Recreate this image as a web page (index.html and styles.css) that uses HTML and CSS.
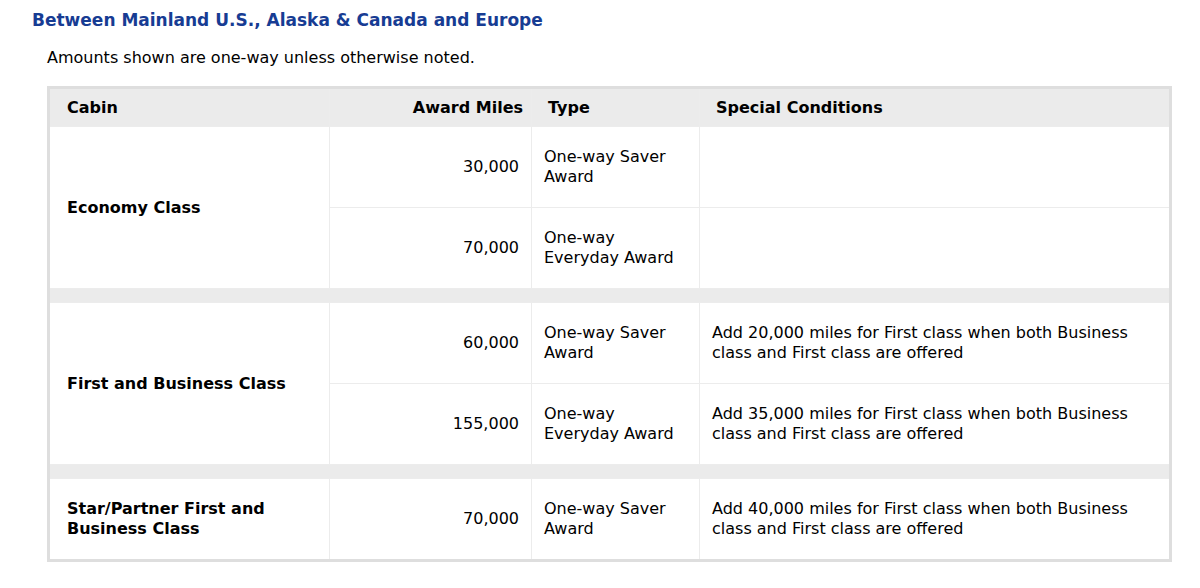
FILE: index.html
```html
<!DOCTYPE html>
<html>
<head>
<meta charset="utf-8">
<link rel="stylesheet" href="styles.css">
</head>
<body>
<div class="page">
  <h2 class="title">Between Mainland U.S., Alaska &amp; Canada and Europe</h2>
  <p class="note">Amounts shown are one-way unless otherwise noted.</p>
  <table class="awards">
    <thead>
      <tr class="head">
        <th class="c-cabin">Cabin</th>
        <th class="c-miles">Award Miles</th>
        <th class="c-type">Type</th>
        <th class="c-cond">Special Conditions</th>
      </tr>
    </thead>
    <tbody>
      <tr class="row">
        <td class="cabin" rowspan="2">Economy Class</td>
        <td class="miles">30,000</td>
        <td class="type">One-way Saver<br>Award</td>
        <td class="cond"></td>
      </tr>
      <tr class="row">
        <td class="miles">70,000</td>
        <td class="type">One-way<br>Everyday Award</td>
        <td class="cond"></td>
      </tr>
      <tr class="spacer"><td colspan="4"></td></tr>
      <tr class="row">
        <td class="cabin" rowspan="2">First and Business Class</td>
        <td class="miles">60,000</td>
        <td class="type">One-way Saver<br>Award</td>
        <td class="cond">Add 20,000 miles for First class when both Business<br>class and First class are offered</td>
      </tr>
      <tr class="row">
        <td class="miles">155,000</td>
        <td class="type">One-way<br>Everyday Award</td>
        <td class="cond">Add 35,000 miles for First class when both Business<br>class and First class are offered</td>
      </tr>
      <tr class="spacer"><td colspan="4"></td></tr>
      <tr class="row last">
        <td class="cabin">Star/Partner First and<br>Business Class</td>
        <td class="miles">70,000</td>
        <td class="type">One-way Saver<br>Award</td>
        <td class="cond">Add 40,000 miles for First class when both Business<br>class and First class are offered</td>
      </tr>
    </tbody>
  </table>
</div>
</body>
</html>
```

FILE: styles.css
```css
html, body {
  margin: 0;
  padding: 0;
  background: #fff;
}

body {
  font-family: "DejaVu Sans", Verdana, sans-serif;
  color: #000;
}

.page {
  padding: 9px 0 0 32px;
}

.title {
  margin: 0;
  font-size: 17px;
  line-height: 22px;
  font-weight: bold;
  color: #173c93;
}

.note {
  margin: 17px 0 0 15px;
  font-size: 16px;
  line-height: 20px;
}

.awards {
  margin: 18px 0 0 15px;
  width: 1125px;
  border: 3px solid #dedede;
  border-spacing: 0;
  border-collapse: separate;
  font-size: 16px;
  line-height: 20px;
  table-layout: fixed;
}

.awards th,
.awards td {
  padding: 0;
  vertical-align: middle;
  border-right: 1px solid #ececec;
  border-bottom: 1px solid #ececec;
}

.awards th:last-child,
.awards td.cond {
  border-right: none;
}

.head th {
  height: 37px;
  background: #ebebeb;
  font-weight: bold;
  text-align: left;
}

.c-cabin { width: 262px; padding-left: 17px !important; }
.c-miles { width: 193px; text-align: right !important; padding-right: 8px !important; }
.c-type { width: 151px; padding-left: 16px !important; }
.c-cond { padding-left: 16px !important; }

.row td {
  height: 80px;
}

.cabin {
  font-weight: bold;
  padding-left: 17px !important;
}

.miles {
  text-align: right;
  padding-right: 12px !important;
}

.type {
  padding-left: 12px !important;
}

.cond {
  padding-left: 12px !important;
}

.spacer td {
  height: 13px;
  background: #ebebeb;
  border-right: none;
}

.row.last td {
  border-bottom: none;
}
```
